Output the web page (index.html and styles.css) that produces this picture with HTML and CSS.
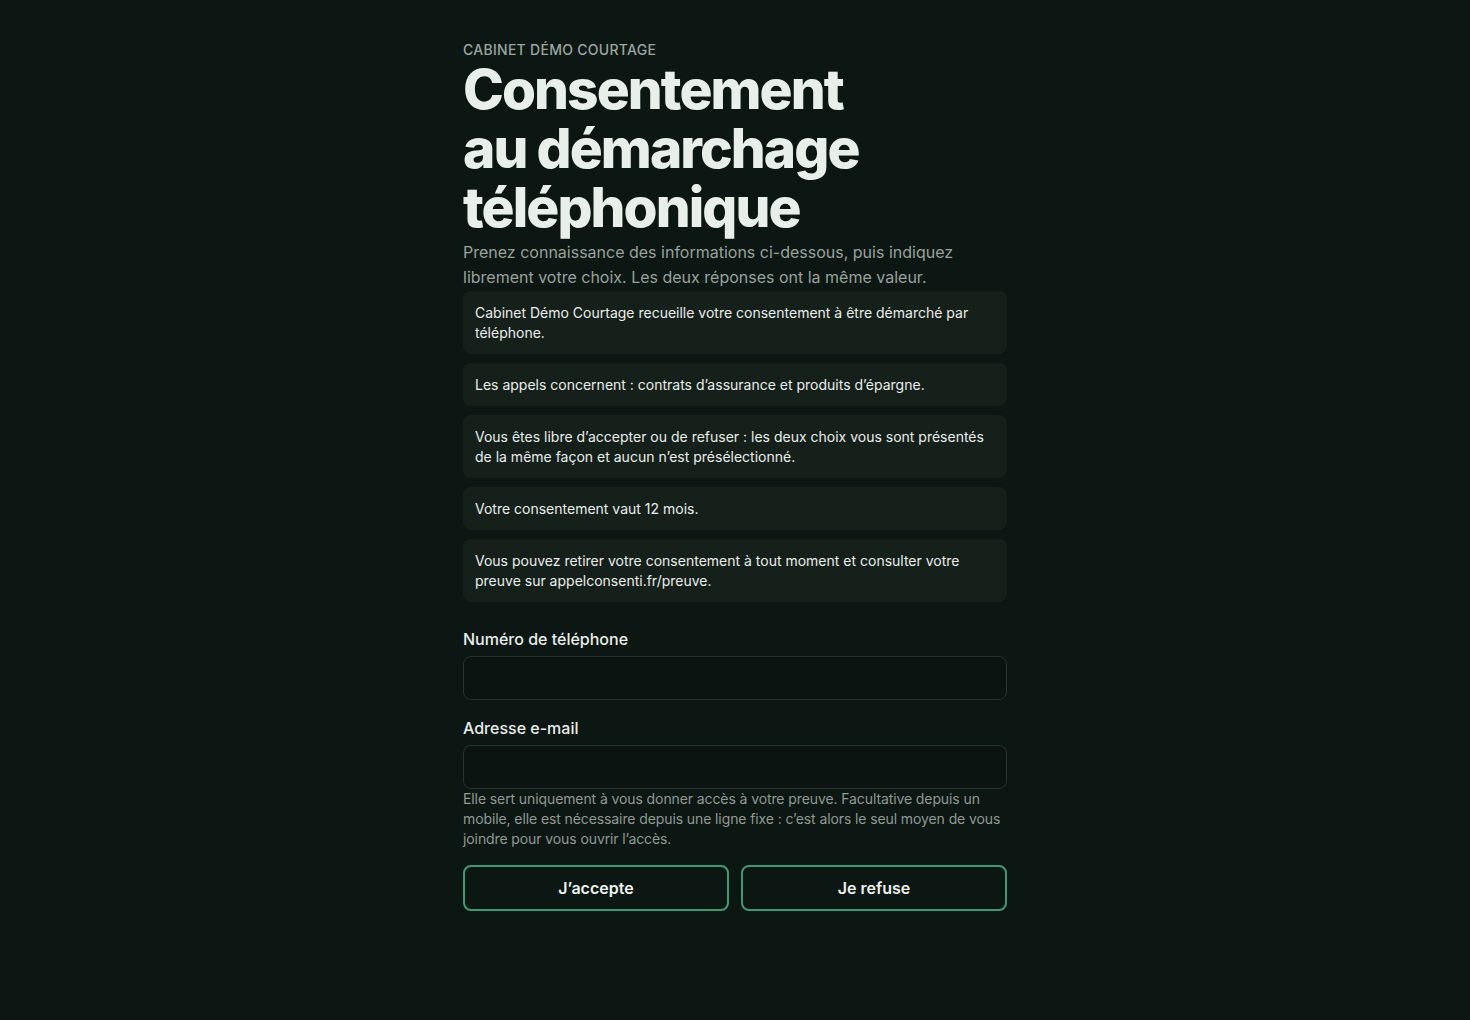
FILE: index.html
```html
<!DOCTYPE html>
<html lang="fr">
<head>
<meta charset="utf-8">
<title>Consentement au démarchage téléphonique</title>
<link rel="stylesheet" href="styles.css">
</head>
<body>
<main class="page">
  <header class="intro">
    <p class="eyebrow">CABINET DÉMO COURTAGE</p>
    <h1 class="title">Consentement<br>au démarchage<br>téléphonique</h1>
    <p class="lead">Prenez connaissance des informations ci-dessous, puis indiquez librement votre choix. Les deux réponses ont la même valeur.</p>
  </header>
  <ul class="facts">
    <li class="fact">Cabinet Démo Courtage recueille votre consentement à être démarché par téléphone.</li>
    <li class="fact">Les appels concernent : contrats d’assurance et produits d’épargne.</li>
    <li class="fact">Vous êtes libre d’accepter ou de refuser : les deux choix vous sont présentés de la même façon et aucun n’est présélectionné.</li>
    <li class="fact">Votre consentement vaut 12 mois.</li>
    <li class="fact">Vous pouvez retirer votre consentement à tout moment et consulter votre preuve sur appelconsenti.fr/preuve.</li>
  </ul>
  <form class="form">
    <label class="field">
      <span class="label">Numéro de téléphone</span>
      <input class="input" type="tel">
    </label>
    <label class="field">
      <span class="label">Adresse e-mail</span>
      <input class="input" type="email">
      <span class="hint">Elle sert uniquement à vous donner accès à votre preuve. Facultative depuis un mobile, elle est nécessaire depuis une ligne fixe : c’est alors le seul moyen de vous joindre pour vous ouvrir l’accès.</span>
    </label>
    <div class="actions">
      <button type="button" class="btn">J’accepte</button>
      <button type="button" class="btn">Je refuse</button>
    </div>
  </form>
</main>
</body>
</html>
```
FILE: styles.css
```css
* { box-sizing: border-box; }
html, body { margin: 0; padding: 0; }
body {
  background: #0c1612;
  color: #e6ece8;
  font-family: Inter, "Noto Sans", sans-serif;
  min-height: 1020px;
}
.page {
  width: 544px;
  margin: 0 auto;
  padding-top: 40px;
}
.eyebrow {
  margin: 0;
  font-size: 14px;
  line-height: 20px;
  font-weight: 500;
  color: #9aa6a0;
  letter-spacing: 0.02em;
}
.title {
  margin: 0;
  font-size: 55px;
  line-height: 59px;
  font-weight: 800;
  letter-spacing: -0.035em;
  color: #e8eeea;
}
.lead {
  margin: 3px 0 1px;
  font-size: 16px;
  line-height: 25px;
  color: #97a29c;
}
.facts {
  list-style: none;
  margin: 0;
  padding: 0;
  display: flex;
  flex-direction: column;
  gap: 9px;
}
.fact {
  background: #16201b;
  border-radius: 8px;
  padding: 12px 12px 11px;
  font-size: 14px;
  line-height: 20px;
  color: #e9eeeb;
}
.form {
  margin-top: 26px;
  display: flex;
  flex-direction: column;
}
.field {
  display: flex;
  flex-direction: column;
}
.field + .field { margin-top: 17px; }
.label {
  font-size: 16px;
  line-height: 22px;
  font-weight: 500;
  color: #e9eeeb;
  margin-bottom: 6px;
}
.input {
  height: 44px;
  width: 100%;
  background: #0b1410;
  border: 1px solid #28332d;
  border-radius: 8px;
  color: #e9eeeb;
  font: inherit;
  padding: 0 12px;
}
.hint {
  font-size: 14px;
  line-height: 20px;
  letter-spacing: -0.1px;
  color: #8f9a94;
}
.actions {
  margin-top: 16px;
  display: grid;
  grid-template-columns: 1fr 1fr;
  gap: 12px;
}
.btn {
  height: 46px;
  background: transparent;
  border: 2px solid #3f9a74;
  border-radius: 8px;
  color: #eef3f0;
  font-family: inherit;
  font-size: 16px;
  font-weight: 600;
  cursor: pointer;
}
```
